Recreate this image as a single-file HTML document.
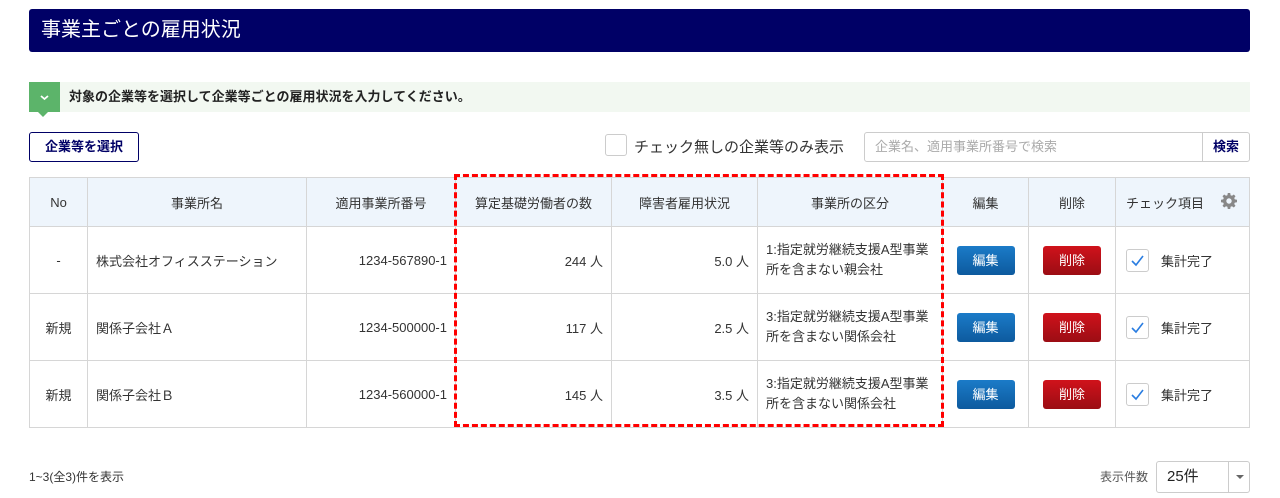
<!DOCTYPE html>
<html><head><meta charset="utf-8"><style>
*{box-sizing:border-box;margin:0;padding:0}
body{width:1280px;height:498px;background:#fff;font-family:"Liberation Sans","Noto Sans CJK JP",sans-serif;font-size:13px;color:#333;position:relative;overflow:hidden}
.abs{position:absolute}
.hdr{left:29px;top:9px;width:1221px;height:43px;background:#000066;border-radius:3px;color:#fff;font-size:20px;line-height:43px;padding-left:12px}
.info{left:29px;top:82px;width:1221px;height:30px;background:#f2f8f1}
.gsq{left:29px;top:82px;width:31px;height:30px;background:#5cb46a}
.gtri{left:38px;top:112px;width:0;height:0;border-left:5px solid transparent;border-right:5px solid transparent;border-top:5px solid #5cb46a}
.itxt{left:69px;top:82px;line-height:30px;font-weight:bold;font-size:13px;color:#222}
.sel{left:29px;top:132px;width:110px;height:30px;border:1px solid #000066;border-radius:3px;color:#000066;font-weight:bold;text-align:center;line-height:28px}
.cb{width:22px;height:22px;border:1px solid #ccc;border-radius:3px;background:#fff}
.search{left:864px;top:132px;width:386px;height:30px;border:1px solid #ccc;border-radius:3px;color:#aaa;line-height:28px;padding-left:10px}
.sbtn{right:0;top:0;width:47px;height:28px;border-left:1px solid #ccc;color:#000066;font-weight:bold;text-align:center;line-height:28px}
table{position:absolute;left:29px;top:177px;width:1221px;border-collapse:collapse}
td,th{border:1px solid #d6d6d6;font-weight:normal}
th{background:#eef5fc;height:49px;text-align:center}
td{height:67px;padding:0 8px}
.r{text-align:right}.c{text-align:center}
.b{display:inline-block;width:58px;height:29px;border-radius:3px;color:#fff;line-height:29px;text-align:center}
.be{background:linear-gradient(#1b7bc8,#0d5a9e)}
.bd{background:linear-gradient(#d0121b,#9b0d14)}
.red{left:454px;top:174px;width:490px;height:253px;border:3px dashed #f00}
.ck{display:inline-block;vertical-align:middle;width:23px;height:23px;border:1px solid #ccc;border-radius:3px;margin-left:2px}
.ckt{display:inline-block;vertical-align:middle;margin-left:12px}
</style></head><body>
<div class="abs hdr">事業主ごとの雇用状況</div>
<div class="abs info"></div>
<div class="abs gsq"><svg width="31" height="30"><path d="M12 14l3.5 3 3.5-3" fill="none" stroke="#fff" stroke-width="1.8"/></svg></div>
<div class="abs gtri"></div>
<div class="abs itxt">対象の企業等を選択して企業等ごとの雇用状況を入力してください。</div>
<div class="abs sel">企業等を選択</div>
<div class="abs cb" style="left:605px;top:134px"></div>
<div class="abs" style="left:634px;top:136px;font-size:15px">チェック無しの企業等のみ表示</div>
<div class="abs search">企業名、適用事業所番号で検索<div class="abs sbtn">検索</div></div>
<table>
<colgroup><col style="width:58px"><col style="width:219px"><col style="width:149px"><col style="width:156px"><col style="width:146px"><col style="width:185px"><col style="width:86px"><col style="width:87px"><col></colgroup>
<tr><th>No</th><th>事業所名</th><th>適用事業所番号</th><th>算定基礎労働者の数</th><th>障害者雇用状況</th><th>事業所の区分</th><th>編集</th><th>削除</th><th style="text-align:left;padding-left:10px">チェック項目 <svg style="float:right;margin-right:12px" width="16" height="16" viewBox="0 0 16 16"><path fill="#888" d="M6.8 0h2.4l.4 2.2 1.4.6 1.8-1.3 1.7 1.7-1.3 1.8.6 1.4 2.2.4v2.4l-2.2.4-.6 1.4 1.3 1.8-1.7 1.7-1.8-1.3-1.4.6-.4 2.2H6.8l-.4-2.2-1.4-.6-1.8 1.3-1.7-1.7 1.3-1.8-.6-1.4L0 9.2V6.8l2.2-.4.6-1.4-1.3-1.8 1.7-1.7 1.8 1.3 1.4-.6zM8 5.3A2.7 2.7 0 1 0 8 10.7 2.7 2.7 0 1 0 8 5.3z"/></svg></th></tr>
<tr><td class="c">-</td><td>株式会社オフィスステーション</td><td class="r">1234-567890-1</td><td class="r">244 人</td><td class="r">5.0 人</td><td style="line-height:20px">1:指定就労継続支援A型事業所を含まない親会社</td><td class="c"><span class="b be">編集</span></td><td class="c"><span class="b bd">削除</span></td><td><span class="ck"><svg width="21" height="21"><path d="M5 11l4 4 7-9" fill="none" stroke="#2a7de1" stroke-width="1.6"/></svg></span><span class="ckt">集計完了</span></td></tr>
<tr><td class="c">新規</td><td>関係子会社Ａ</td><td class="r">1234-500000-1</td><td class="r">117 人</td><td class="r">2.5 人</td><td style="line-height:20px">3:指定就労継続支援A型事業所を含まない関係会社</td><td class="c"><span class="b be">編集</span></td><td class="c"><span class="b bd">削除</span></td><td><span class="ck"><svg width="21" height="21"><path d="M5 11l4 4 7-9" fill="none" stroke="#2a7de1" stroke-width="1.6"/></svg></span><span class="ckt">集計完了</span></td></tr>
<tr><td class="c">新規</td><td>関係子会社Ｂ</td><td class="r">1234-560000-1</td><td class="r">145 人</td><td class="r">3.5 人</td><td style="line-height:20px">3:指定就労継続支援A型事業所を含まない関係会社</td><td class="c"><span class="b be">編集</span></td><td class="c"><span class="b bd">削除</span></td><td><span class="ck"><svg width="21" height="21"><path d="M5 11l4 4 7-9" fill="none" stroke="#2a7de1" stroke-width="1.6"/></svg></span><span class="ckt">集計完了</span></td></tr>
</table>
<div class="abs red"></div>
<div class="abs" style="left:29px;top:468px;font-size:12px">1~3(全3)件を表示</div>
<div class="abs" style="left:1100px;top:468px;font-size:12px;color:#555">表示件数</div>
<div class="abs" style="left:1156px;top:461px;width:94px;height:32px;border:1px solid #ccc;border-radius:3px;font-size:15px;line-height:30px;padding-left:10px;color:#222">25件<div class="abs" style="left:71px;top:0;width:1px;height:30px;background:#ccc"></div><div class="abs" style="left:79px;top:13px;border-left:4px solid transparent;border-right:4px solid transparent;border-top:4px solid #666"></div></div>
</body></html>
